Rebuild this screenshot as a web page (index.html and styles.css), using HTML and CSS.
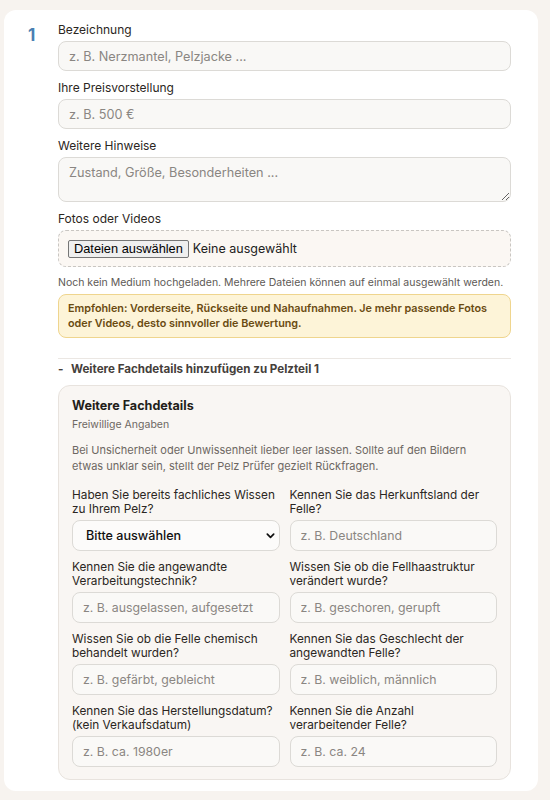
FILE: index.html
```html
<!DOCTYPE html>
<html lang="de">
<head>
<meta charset="utf-8">
<link rel="stylesheet" href="styles.css">
</head>
<body>
<div class="card">
  <div class="num">1</div>
  <div class="content">
    <div class="field">
      <label class="label">Bezeichnung</label>
      <input class="input" type="text" placeholder="z. B. Nerzmantel, Pelzjacke ...">
    </div>
    <div class="field">
      <label class="label">Ihre Preisvorstellung</label>
      <input class="input" type="text" placeholder="z. B. 500 €">
    </div>
    <div class="field">
      <label class="label">Weitere Hinweise</label>
      <textarea class="input textarea" placeholder="Zustand, Größe, Besonderheiten ..."></textarea>
    </div>
    <div class="field">
      <label class="label">Fotos oder Videos</label>
      <div class="drop"><button class="filebtn" type="button">Dateien auswählen</button><span class="nofile">Keine ausgewählt</span></div>
    </div>
    <p class="help">Noch kein Medium hochgeladen. Mehrere Dateien können auf einmal ausgewählt werden.</p>
    <div class="note">Empfohlen: Vorderseite, Rückseite und Nahaufnahmen. Je mehr passende Fotos oder Videos, desto sinnvoller die Bewertung.</div>
    <div class="toggle"><span class="dash">-</span><span>Weitere Fachdetails hinzufügen zu Pelzteil 1</span></div>
    <div class="panel">
      <h3 class="ptitle">Weitere Fachdetails</h3>
      <p class="psub">Freiwillige Angaben</p>
      <p class="pdesc">Bei Unsicherheit oder Unwissenheit lieber leer lassen. Sollte auf den Bildern etwas unklar sein, stellt der Pelz Prüfer gezielt Rückfragen.</p>
      <div class="grid">
        <div class="gfield">
          <label class="glabel">Haben Sie bereits fachliches Wissen zu Ihrem Pelz?</label>
          <div class="selectwrap">
            <select class="ginput select"><option>Bitte auswählen</option></select>
            <svg class="chev" viewBox="0 0 10 7" width="9" height="6"><path d="M1.3 1.3L5 5l3.7-3.7" fill="none" stroke="#111" stroke-width="2" stroke-linecap="round" stroke-linejoin="round"/></svg>
          </div>
        </div>
        <div class="gfield">
          <label class="glabel">Kennen Sie das Herkunftsland der Felle?</label>
          <input class="ginput" type="text" placeholder="z. B. Deutschland">
        </div>
        <div class="gfield">
          <label class="glabel">Kennen Sie die angewandte Verarbeitungstechnik?</label>
          <input class="ginput" type="text" placeholder="z. B. ausgelassen, aufgesetzt">
        </div>
        <div class="gfield">
          <label class="glabel">Wissen Sie ob die Fellhaastruktur verändert wurde?</label>
          <input class="ginput" type="text" placeholder="z. B. geschoren, gerupft">
        </div>
        <div class="gfield">
          <label class="glabel">Wissen Sie ob die Felle chemisch behandelt wurden?</label>
          <input class="ginput" type="text" placeholder="z. B. gefärbt, gebleicht">
        </div>
        <div class="gfield">
          <label class="glabel">Kennen Sie das Geschlecht der angewandten Felle?</label>
          <input class="ginput" type="text" placeholder="z. B. weiblich, männlich">
        </div>
        <div class="gfield">
          <label class="glabel">Kennen Sie das Herstellungsdatum? (kein Verkaufsdatum)</label>
          <input class="ginput" type="text" placeholder="z. B. ca. 1980er">
        </div>
        <div class="gfield">
          <label class="glabel">Kennen Sie die Anzahl verarbeitender Felle?</label>
          <input class="ginput" type="text" placeholder="z. B. ca. 24">
        </div>
      </div>
    </div>
  </div>
</div>
</body>
</html>
```
FILE: styles.css
```css
* { box-sizing: border-box; }
html, body { margin: 0; padding: 0; }
body {
  background: #f7f3ef;
  font-family: "Inter", "Open Sans", sans-serif;
  color: #2b2622;
  padding: 10px 12px 10px 4px;
}
.card {
  background: #ffffff;
  border-radius: 12px;
  display: flex;
  padding: 12px 27px 11px 24px;
}
.num {
  width: 30px;
  flex: none;
  font-size: 17px;
  font-weight: 700;
  color: #4a7fb2;
  line-height: 20px;
  padding-top: 3px;
}
.content { flex: 1; min-width: 0; }
.field { display: flex; flex-direction: column; margin-bottom: 9px; }
.label {
  font-size: 12px;
  line-height: 16px;
  margin-bottom: 3px;
  color: #2b2622;
}
.input {
  height: 30px;
  border: 1px solid #dcdad6;
  border-radius: 8px;
  background: #f9f8f6;
  padding: 0 10px;
  font-family: inherit;
  font-size: 12.7px;
  color: #333;
  outline: none;
}
.input::placeholder, .ginput::placeholder { color: #8a8682; }
.textarea {
  height: 45px;
  padding-top: 7px;
  resize: vertical;
  display: block;
}
.drop {
  height: 37px;
  border: 1px dashed #c9c6c2;
  border-radius: 8px;
  background: #fbf7f3;
  display: flex;
  align-items: center;
  padding: 0 9px;
}
.filebtn {
  font-family: "Liberation Sans", Arial, sans-serif;
  font-size: 12.8px;
  height: 18px;
  padding: 0 5px;
  border: 1px solid #767676;
  border-radius: 2px;
  background: #efefef;
  color: #000;
  margin-right: 4px;
}
.nofile { font-size: 12.5px; color: #222; }
.help {
  margin: 1px 0 0;
  font-size: 10.5px;
  line-height: 14px;
  color: #5d5955;
}
.note {
  margin-top: 4px;
  border: 1px solid #efd58e;
  background: #fdf4d8;
  border-radius: 8px;
  padding: 6px 9px;
  font-size: 10.8px;
  line-height: 15px;
  font-weight: 600;
  color: #6a4b12;
}
.toggle {
  margin-top: 20px;
  border-top: 1px solid #ebe7e3;
  padding-top: 2px;
  line-height: 16px;
  margin-bottom: 8px;
  display: flex;
  font-size: 11.6px;
  font-weight: 700;
  color: #45403b;
}
.dash { width: 13px; }
.panel {
  background: #f9f6f3;
  border: 1px solid #e8e3de;
  border-radius: 12px;
  padding: 11px 13px 12px 13px;
}
.ptitle {
  margin: 0;
  font-size: 12.6px;
  line-height: 18px;
  font-weight: 700;
  color: #231e1a;
}
.psub {
  margin: 3px 0 0;
  font-size: 10.5px;
  line-height: 14px;
  color: #6d6762;
}
.pdesc {
  margin: 10px 0 0;
  font-size: 11px;
  line-height: 16px;
  color: #6d6762;
}
.grid {
  margin-top: 14px;
  display: grid;
  grid-template-columns: 1fr 1fr;
  column-gap: 10px;
  row-gap: 9px;
}
.gfield { display: flex; flex-direction: column; }
.glabel {
  font-size: 11.8px;
  line-height: 14px;
  margin-bottom: 4px;
  color: #2b2622;
}
.ginput {
  height: 31px;
  border: 1px solid #dcdad6;
  border-radius: 8px;
  background: #faf9f7;
  padding: 0 10px;
  font-family: inherit;
  font-size: 12.3px;
  color: #333;
  outline: none;
  width: 100%;
}
.selectwrap { position: relative; }
.select {
  appearance: none;
  -webkit-appearance: none;
  padding-left: 13px;
  font-size: 12.6px;
  font-weight: 500;
  color: #111;
  background: #fcfbfa;
}
.chev { position: absolute; right: 5px; top: 13px; pointer-events: none; }
```
